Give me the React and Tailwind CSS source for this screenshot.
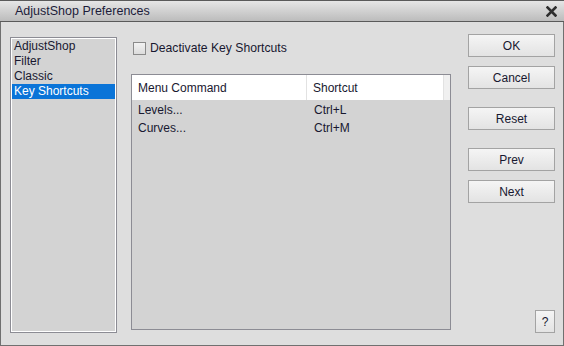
import React from 'react';

const font = { fontFamily: '"Liberation Sans", Arial, sans-serif' };

function Btn({ children, className = '' }) {
  return (
    <button
      className={`h-[23px] w-[87px] border border-[#a3a3a3] bg-gradient-to-b from-[#f5f5f5] to-[#e3e3e3] text-[12px] text-[#181830] flex items-center justify-center ${className}`}
    >
      {children}
    </button>
  );
}

export default function App() {
  const items = ['AdjustShop', 'Filter', 'Classic', 'Key Shortcuts'];
  const rows = [
    ['Levels...', 'Ctrl+L'],
    ['Curves...', 'Ctrl+M'],
  ];
  return (
    <div style={font} className="w-[564px] h-[346px] flex flex-col bg-[#dedede] border-x border-b border-[#707070] text-[12px] text-[#181830] select-none">
      <div className="h-[22px] shrink-0 flex items-center justify-between pl-[15px] pr-[7px] bg-gradient-to-b from-[#e6e6e6] to-[#bcbcbc] border-t border-b border-[#5a5a5a] -mx-px">
        <span className="text-[12.5px] text-[#1c1c3a]">AdjustShop Preferences</span>
        <svg width="11" height="11" viewBox="0 0 11 11">
          <path d="M1.5 1.5 L9.5 9.5 M9.5 1.5 L1.5 9.5" stroke="#2e2e2e" strokeWidth="2.6" strokeLinecap="square" />
        </svg>
      </div>
      <div className="flex-1 flex pl-[9px] pr-[8px]">
        <div className="mt-[15px] mb-[12px] w-[107px] border border-[#8c8c94]">
          <div className="h-full border border-white bg-[#d3d3d3] px-0">
            {items.map((it, i) => (
              <div
                key={it}
                className={`h-[15px] leading-[15px] pl-[2px] ${i === 3 ? 'bg-[#0a74d8] text-white' : ''}`}
              >
                {it}
              </div>
            ))}
          </div>
        </div>
        <div className="ml-[14px] w-[320px] flex flex-col">
          <label className="mt-[20px] h-[13px] flex items-center gap-[4px] ml-[2px]">
            <span className="w-[13px] h-[13px] border border-[#8a8a8a] bg-gradient-to-b from-[#f2f2f2] to-[#dcdcdc]" />
            <span className="leading-[13px] text-[12.2px]">Deactivate Key Shortcuts</span>
          </label>
          <div className="mt-[19px] h-[256px] border border-[#8c8c94] bg-[#d3d3d3]">
            <div className="flex h-[25px] bg-white">
              <div className="w-[175px] border-r border-[#e2e2e2] pl-[6px] flex items-center">Menu Command</div>
              <div className="w-[136px] pl-[6px] flex items-center">Shortcut</div>
              <div className="flex-1 bg-[#f0f0f0] border-l border-[#e2e2e2]" />
            </div>
            <div className="pt-px">
              {rows.map(([a, b]) => (
                <div key={a} className="flex h-[18px] items-center">
                  <div className="w-[175px] pl-[6px]">{a}</div>
                  <div className="pl-[7px]">{b}</div>
                </div>
              ))}
            </div>
          </div>
        </div>
        <div className="ml-[17px] flex flex-col items-end">
          <Btn className="mt-[12px]">OK</Btn>
          <Btn className="mt-[9px]">Cancel</Btn>
          <Btn className="mt-[18px]">Reset</Btn>
          <Btn className="mt-[18px]">Prev</Btn>
          <Btn className="mt-[9px]">Next</Btn>
          <button className="mt-auto mb-[12px] w-[20px] h-[23px] border border-[#a3a3a3] bg-gradient-to-b from-[#f5f5f5] to-[#e3e3e3] text-[12px] text-[#181830] flex items-center justify-center">
            ?
          </button>
        </div>
      </div>
    </div>
  );
}
